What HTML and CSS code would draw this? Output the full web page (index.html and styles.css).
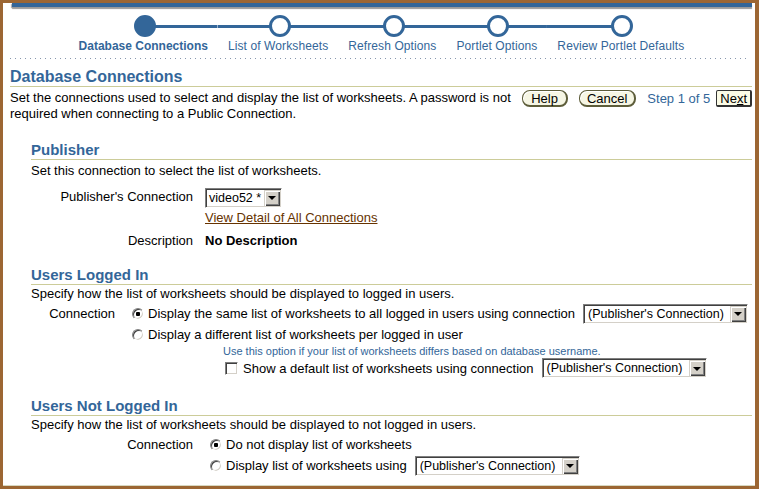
FILE: index.html
```html
<!DOCTYPE html>
<html>
<head>
<meta charset="utf-8">
<link rel="stylesheet" href="styles.css">
</head>
<body>
<div class="frame">
  <div class="topbar"></div>
  <div class="train">
    <div class="step first current"><div class="track"><span class="dot"></span></div><span class="lbl">Database Connections</span></div>
    <div class="step"><div class="track"><span class="dot"></span></div><span class="lbl">List of Worksheets</span></div>
    <div class="step"><div class="track"><span class="dot"></span></div><span class="lbl">Refresh Options</span></div>
    <div class="step"><div class="track"><span class="dot"></span></div><span class="lbl">Portlet Options</span></div>
    <div class="step last"><div class="track"><span class="dot"></span></div><span class="lbl">Review Portlet Defaults</span></div>
  </div>
  <div class="content">
    <div class="dots"></div>
    <h1 class="page-h">Database Connections</h1>
    <div class="intro">
      <p class="intro-text">Set the connections used to select and display the list of worksheets. A password is not required when connecting to a Public Connection.</p>
      <div class="actions">
        <button class="pill help">Help</button>
        <button class="pill cancel">Cancel</button>
        <span class="stepof">Step 1 of 5</span>
        <button class="next">Ne<u>x</u>t</button>
      </div>
    </div>

    <section class="sec">
      <h2 class="sec-h">Publisher</h2>
      <p class="line">Set this connection to select the list of worksheets.</p>
      <div class="form wide">
        <div class="lab row-sel">Publisher's Connection</div>
        <div class="fld row-sel"><span class="sel small"><span class="val">video52 *</span><span class="arr"><i></i></span></span></div>
        <div class="lab row-link"></div>
        <div class="fld row-link"><a class="link" href="#">View Detail of All Connections</a></div>
        <div class="lab row-desc">Description</div>
        <div class="fld row-desc"><b>No Description</b></div>
      </div>
    </section>

    <section class="sec sec2">
      <h2 class="sec-h">Users Logged In</h2>
      <p class="line">Specify how the list of worksheets should be displayed to logged in users.</p>
      <div class="form narrow">
        <div class="lab opt-lab">Connection</div>
        <div class="fld">
          <div class="opt"><input type="radio" name="li" checked><span>Display the same list of worksheets to all logged in users using connection</span><span class="sel big"><span class="val">(Publisher's Connection)</span><span class="arr"><i></i></span></span></div>
          <div class="opt"><input type="radio" name="li"><span>Display a different list of worksheets per logged in user</span></div>
          <div class="indent">
            <div class="hint">Use this option if your list of worksheets differs based on database username.</div>
            <div class="opt chk"><input type="checkbox"><span>Show a default list of worksheets using connection</span><span class="sel big"><span class="val">(Publisher's Connection)</span><span class="arr"><i></i></span></span></div>
          </div>
        </div>
      </div>
    </section>

    <section class="sec sec3">
      <h2 class="sec-h">Users Not Logged In</h2>
      <p class="line">Specify how the list of worksheets should be displayed to not logged in users.</p>
      <div class="form wide">
        <div class="lab opt-lab">Connection</div>
        <div class="fld">
          <div class="opt"><input type="radio" name="nli" checked><span>Do not display list of worksheets</span></div>
          <div class="opt"><input type="radio" name="nli"><span>Display list of worksheets using</span><span class="sel big"><span class="val">(Publisher's Connection)</span><span class="arr"><i></i></span></span></div>
        </div>
      </div>
    </section>
  </div>
</div>
</body>
</html>
```
FILE: styles.css
```css
html, body {
  margin: 0;
  padding: 0;
  background: #fff;
}
body {
  font-family: "Liberation Sans", Arial, sans-serif;
  font-size: 13px;
  color: #000;
}
.frame {
  box-sizing: border-box;
  width: 759px;
  height: 489px;
  border-style: solid;
  border-color: #9c6633;
  border-width: 3px 4px 3px 3px;
  box-shadow: inset 0 -1px 0 #d8d8c0;
  overflow: hidden;
}
.topbar {
  height: 4px;
  margin: 0 3px 0 9px;
  background: #336699;
  box-shadow: 0 2px 1px #9a9a9a, -1px 1px 1px #aaa;
}
.train {
  display: flex;
  justify-content: center;
  margin-top: 8px;
  padding-left: 5px;
}
.step {
  display: flex;
  flex-direction: column;
  align-items: center;
}
.track {
  align-self: stretch;
  height: 22px;
  display: flex;
  justify-content: center;
  padding-left: 3px;
  background: linear-gradient(#336699, #336699) center / 100% 3px no-repeat;
}
.first .track {
  background-position: right center;
  background-size: 50% 3px;
}
.last .track {
  background-position: left center;
  background-size: 50% 3px;
}
.dot {
  box-sizing: border-box;
  width: 22px;
  height: 22px;
  border-radius: 50%;
  border: 3px solid #336699;
  background: #fff;
}
.current .dot {
  background: #336699;
}
.lbl {
  padding: 0 10px;
  margin-top: 2px;
  font-size: 12px;
  line-height: 14px;
  letter-spacing: 0.1px;
  color: #336699;
  white-space: nowrap;
}
.current .lbl {
  font-weight: bold;
  letter-spacing: 0;
}
.content {
  padding: 0 3px 0 7px;
}
.dots {
  margin: 5px 2px 0 0;
  height: 1px;
  background: linear-gradient(to right, #8797ad 1px, transparent 1px) 0 0 / 5px 1px repeat-x;
}
.page-h {
  margin: 8px 0 0;
  font-size: 16px;
  line-height: 19px;
  font-weight: bold;
  color: #336699;
  border-bottom: 1px solid #cccc99;
}
.intro {
  display: flex;
  align-items: flex-start;
  margin-top: 3px;
}
.intro-text {
  flex: 1;
  margin: 0;
  line-height: 16px;
}
.actions {
  display: flex;
  align-items: center;
  flex: none;
  margin-left: 2px;
}
.pill {
  box-sizing: border-box;
  height: 17px;
  padding: 0 8px;
  font: 13px "Liberation Sans", Arial, sans-serif;
  line-height: 13px;
  color: #000;
  background: #f6f6e4;
  border: 1px solid #5d5d3a;
  border-width: 1px 2px 2px 1px;
  border-radius: 8px;
  box-shadow: inset 1px 1px 0 #fff;
}
.cancel {
  margin-left: 11px;
  padding: 0 7px;
}
.stepof {
  margin-left: 11px;
  color: #336699;
  white-space: nowrap;
}
.next {
  box-sizing: border-box;
  margin-left: 6px;
  height: 17px;
  padding: 0 3px;
  font: 13px "Liberation Sans", Arial, sans-serif;
  line-height: 13px;
  color: #000;
  background: #fbfbe6;
  border: 1px solid #333;
  border-width: 1px 2px 2px 1px;
  border-radius: 2px;
}
.next u {
  text-decoration: underline;
}
.sec {
  margin-left: 21px;
}
.sec-h {
  margin: 19px 0 0;
  font-size: 15px;
  line-height: 18px;
  font-weight: bold;
  color: #336699;
  border-bottom: 1px solid #cccc99;
}
.sec2 .sec-h {
  margin-top: 17px;
}
.sec3 .sec-h {
  margin-top: 18px;
}
.line {
  margin: 3px 0 0;
  line-height: 16px;
  white-space: nowrap;
}
.sec2 .line, .sec3 .line {
  margin-top: 1px;
}
.form {
  display: grid;
  column-gap: 12px;
  align-items: center;
}
.form.wide {
  grid-template-columns: 162px auto;
}
.form.narrow {
  grid-template-columns: 84px auto;
}
.lab {
  text-align: right;
  white-space: nowrap;
}
.opt-lab {
  align-self: start;
  line-height: 21px;
}
.row-sel {
  margin-top: 7px;
  height: 20px;
  line-height: 20px;
}
.row-link {
  margin-top: 3px;
  line-height: 16px;
}
.row-desc {
  margin-top: 7px;
  line-height: 16px;
}
.link {
  color: #663300;
  text-decoration: underline;
}
.fld b {
  font-weight: bold;
}
.sec .form {
  margin-top: 1px;
}
.opt {
  display: flex;
  align-items: center;
  height: 21px;
  white-space: nowrap;
}
input[type=radio], input[type=checkbox] {
  -webkit-appearance: none;
  appearance: none;
  box-sizing: border-box;
  margin: 0 4px 0 5px;
  width: 12px;
  height: 12px;
  background: #fff;
  border: 1px solid;
  border-color: #808080 #fff #fff #808080;
  box-shadow: inset 1px 1px 0 #404040, inset -1px -1px 0 #d4d0c8;
  flex: none;
}
input[type=radio] {
  border-radius: 50%;
}
input[type=radio]:checked {
  background: radial-gradient(circle at 50% 50%, #000 0, #000 2px, #fff 2.5px);
}
input[type=checkbox] {
  width: 13px;
  height: 13px;
  margin: 0 5px 0 2px;
}
.indent {
  margin-left: 96px;
}
.hint {
  font-size: 11px;
  line-height: 12px;
  color: #336699;
  white-space: nowrap;
}
.chk {
  height: 22px;
}
.sel {
  box-sizing: border-box;
  display: inline-flex;
  align-items: center;
  height: 20px;
  margin-left: 8px;
  background: #fff;
  border: 1px solid;
  border-color: #808080 #fff #fff #808080;
  box-shadow: inset 1px 1px 0 #404040, inset -1px -1px 0 #d4d0c8;
  padding: 2px 1px 2px 2px;
  vertical-align: middle;
}
.row-sel .sel {
  margin-left: 0;
}
.sel .val {
  flex: 1;
  padding-left: 2px;
  font-size: 12.5px;
  line-height: 16px;
  white-space: nowrap;
  overflow: hidden;
}
.sel.small {
  width: 77px;
}
.sel.small .val {
  padding-left: 1px;
}
.sel.big {
  width: 165px;
}
.arr {
  box-sizing: border-box;
  flex: none;
  width: 16px;
  height: 16px;
  display: flex;
  align-items: center;
  justify-content: center;
  background: #d4d0c8;
  box-shadow: inset 1px 1px 0 #d4d0c8, inset 2px 2px 0 #fff, inset -1px -1px 0 #404040, inset -2px -2px 0 #808080;
}
.arr i {
  display: block;
  width: 0;
  height: 0;
  border-left: 4px solid transparent;
  border-right: 4px solid transparent;
  border-top: 4px solid #000;
  margin-top: 1px;
}
```
